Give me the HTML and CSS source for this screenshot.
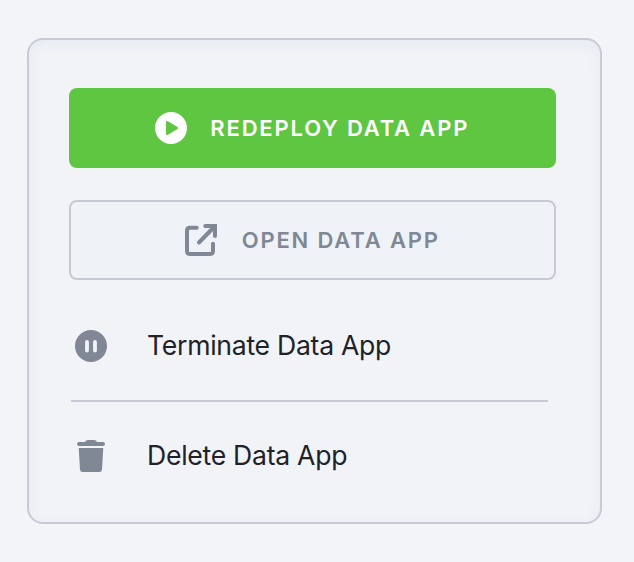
FILE: index.html
```html
<!DOCTYPE html>
<html lang="en">
<head>
<meta charset="utf-8">
<title>Data App</title>
<link rel="stylesheet" href="styles.css">
</head>
<body>
<main class="card">
  <button class="btn btn-primary">
    <svg class="icon" width="32" height="32" viewBox="0 0 32 32"><path fill="currentColor" fill-rule="evenodd" d="M16 0a16 16 0 1 0 0 32a16 16 0 0 0 0-32zM13 9.200L22.500 14.900Q24 16 22.500 17.100L13 22.800Q11 23.600 11 21.600V10.400Q11 8.400 13 9.200z"/></svg>
    <span>REDEPLOY DATA APP</span>
  </button>
  <button class="btn btn-outline">
    <svg class="icon" width="34" height="34" viewBox="0 0 34 34" fill="none" stroke="currentColor" stroke-width="4" stroke-linecap="round"><path d="M12.700 4.700H6Q3 4.700 3 7.700V28Q3 31 6 31H26Q29 31 29 28V20.700M21.300 3H31V13M31 3L15 19.500"/></svg>
    <span>OPEN DATA APP</span>
  </button>
  <div class="menu">
    <div class="item">
      <svg class="icon" width="32" height="32" viewBox="0 0 32 32"><circle cx="16" cy="16" r="16" fill="currentColor"/><path d="M12 12v8.500M20 12v8.500" stroke="#f2f4f8" stroke-width="3.800" stroke-linecap="round"/></svg>
      <span>Terminate Data App</span>
    </div>
    <div class="item">
      <svg class="icon" width="32" height="32" viewBox="0 0 32 32" fill="currentColor"><path d="M4 2h6q.8-2 3-2h6q2.200 0 3 2h6a2 2 0 0 1 0 4H4a2 2 0 0 1 0-4zM3.700 8h24.600L27 29.500q-.2 2.500-2.500 2.500h-17q-2.300 0-2.500-2.500z"/></svg>
      <span>Delete Data App</span>
    </div>
  </div>
</main>
</body>
</html>
```
FILE: styles.css
```css
* { box-sizing: border-box; }
body { margin: 0; padding: 38px 32px 38px 27px; background: #f3f4f8; font-family: Inter, sans-serif; }
.card { height: 486px; padding: 48px 44px 0 40px; border: 2px solid #c8cad6; border-radius: 16px; background: #f1f3f7; box-shadow: inset 0 4px 14px rgba(200, 206, 222, .22); }
.btn { display: flex; align-items: center; justify-content: center; gap: 23.5px; width: 100%; height: 80px; margin: 0 0 32px; padding: 0 1px 0 0; border: 0; border-radius: 8px; font: 600 22px Inter, sans-serif; letter-spacing: 1.83px; }
.btn-primary { background: #5fc642; color: #fff; }
.btn-outline { border: 2px solid #c7cad4; background: #eff3f7; color: #808795; }
.menu { margin: -22px 8px 0 2px; }
.item { display: flex; align-items: center; gap: 40px; height: 111px; padding: 1px 0 0 4px; color: #808795; }
.item + .item { height: 110px; padding-top: 0; margin-top: -1px; border-top: 2px solid #c8cad8; }
.item span { margin-top: -2px; color: #202228; font-size: 26.6px; letter-spacing: -.28px; }
.icon { flex: none; }
```
